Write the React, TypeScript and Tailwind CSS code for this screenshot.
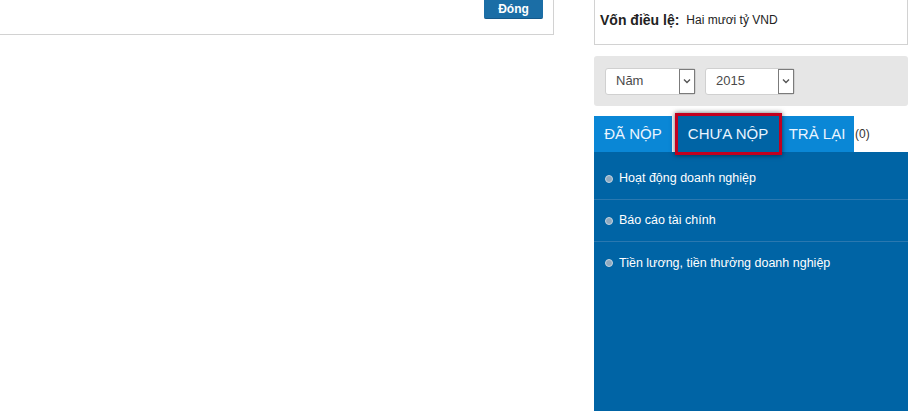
import React from 'react'

const items = ['Hoạt động doanh nghiệp', 'Báo cáo tài chính', 'Tiền lương, tiền thưởng doanh nghiệp']

function FakeSelect({ label, width }: { label: string; width: string }) {
  return (
    <div className={`${width} h-[27px] flex items-stretch bg-white border border-[#d0d0d0] rounded-[3px]`}>
      <div className="flex-1 flex items-center pl-[10px] text-[13px] text-[#4a4a4a]">{label}</div>
      <div className="w-[16px] flex items-center justify-center border border-[#7b7b7b] bg-white">
        <svg width="8" height="6" viewBox="0 0 8 6">
          <path d="M1 1.5 L4 4.5 L7 1.5" fill="none" stroke="#555" strokeWidth="1.4" />
        </svg>
      </div>
    </div>
  )
}

export default function App() {
  return (
    <div className="w-[912px] h-[411px] overflow-hidden bg-white flex font-['Liberation_Sans',Arial,sans-serif]">
      {/* left dialog bottom */}
      <div className="w-[554px] shrink-0">
        <div className="h-[35px] border-b border-r border-[#d2d2d2] flex justify-end pr-[10px]">
          <button className="w-[59px] h-[19px] bg-[#1b6ea6] text-white text-[12px] font-bold rounded-b-[2px] border-b border-[#15598a] leading-[17px]">
            Đóng
          </button>
        </div>
      </div>

      {/* right sidebar */}
      <div className="ml-[40px] w-[314px] shrink-0 flex flex-col">
        <div className="h-[45px] border-l border-r border-b border-[#d2d2d2] flex items-center pl-[5px] pb-[4px]">
          <span className="text-[14px] font-bold text-[#222]">Vốn điều lệ:</span>
          <span className="ml-[7px] text-[12px] text-[#222]">Hai mươi tỷ VND</span>
        </div>

        <div className="mt-[11px] h-[50px] bg-[#e6e6e6] rounded-[3px] flex items-center gap-[9px] pl-[11px]">
          <FakeSelect label="Năm" width="w-[91px]" />
          <FakeSelect label="2015" width="w-[90px]" />
        </div>

        <div className="mt-[10px] h-[36px] flex items-stretch relative">
          <div className="w-[78px] bg-[#0a87d6] text-[#eaf5ff] text-[15px] flex items-center justify-center">ĐÃ NỘP</div>
          <div className="w-[4px]" />
          <div className="w-[104px] bg-[#0064a5] text-[#eaf5ff] text-[15px] flex items-center justify-center relative">
            CHƯA NỘP
            <div className="absolute left-[-1px] right-[-2px] top-[-3px] bottom-[-3px] border-[3px] border-[#c3001f] shadow-[0_0_5px_rgba(0,0,0,0.6)]" />
          </div>
          <div className="w-[74px] bg-[#0a87d6] text-[#eaf5ff] text-[15px] flex items-center justify-center">TRẢ LẠI</div>
          <div className="text-[12px] text-[#333] pl-[1px] pt-[9px]">(0)</div>
        </div>

        <div className="flex-1 bg-[#0064a5] pt-[6px]">
          {items.map((t) => (
            <div key={t} className="h-[42px] flex items-center pl-[11px] border-b border-[#2a78b0] last:border-b-0">
              <span className="w-[8px] h-[8px] rounded-full bg-[#8fa9bf] border border-[#c4d4e2]" />
              <span className="ml-[6px] text-[12.5px] text-white">{t}</span>
            </div>
          ))}
        </div>
      </div>
    </div>
  )
}
